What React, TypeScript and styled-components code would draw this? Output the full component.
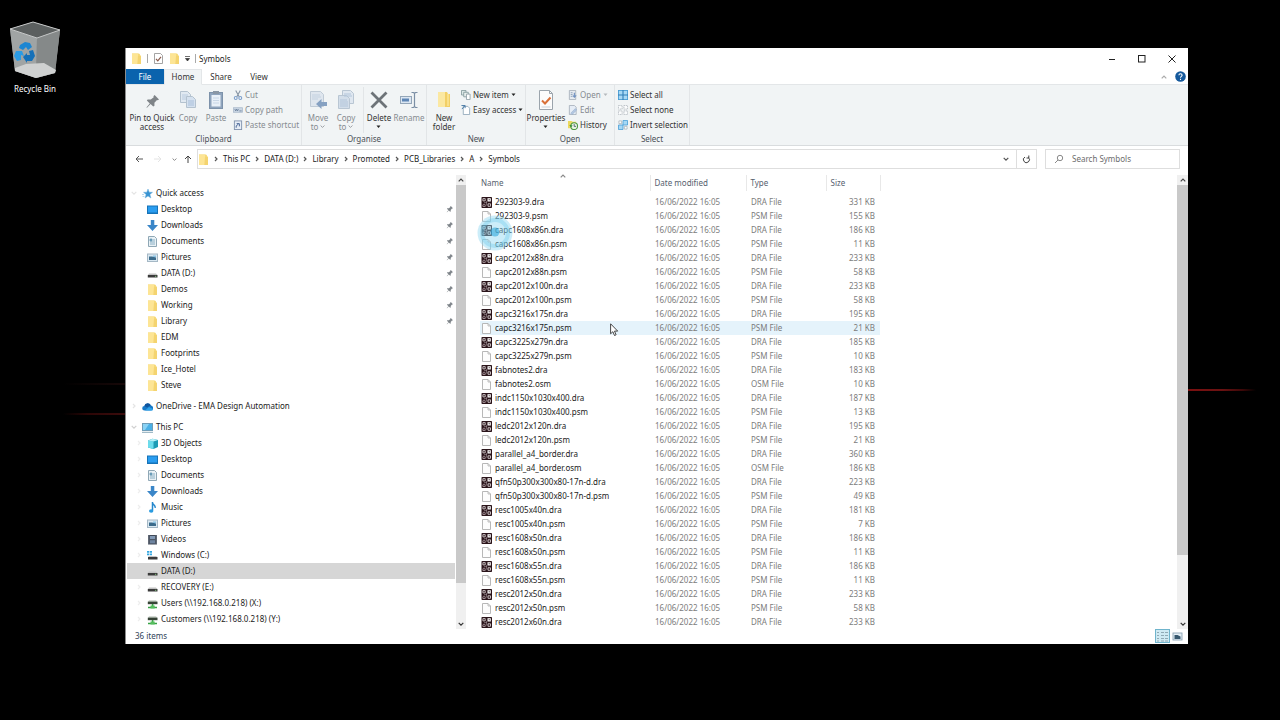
import React from "react";
import styled, { createGlobalStyle, css } from "styled-components";

const GlobalStyle = createGlobalStyle`
  * { box-sizing: border-box; }
  body {
    margin: 0;
    background: #000;
    color: #1b1b1b;
    font: 8px/10px "Noto Sans", "Open Sans", sans-serif;
  }
  button, input { font: inherit; color: inherit; }
  button { border: 0; padding: 0; background: none; }
  a { color: inherit; text-decoration: none; }
  svg { display: block; flex: none; }
`;

/* ---------- desktop ---------- */

const Desktop = styled.main`
  display: grid;
  grid-template-columns: 125px minmax(0, 1fr) 92px;
  align-items: start;
  min-height: 100vh;
  background: #000;
`;

const Shortcut = styled.a`
  display: flex;
  flex-direction: column;
  align-items: center;
  gap: 6px;
  width: 70px;
  padding-top: 20px;
  color: #fff;
`;

const WallpaperSide = styled.div<{ $side: "left" | "right" }>`
  display: flex;
  flex-direction: column;
  ${(p) =>
    p.$side === "left"
      ? css`
          padding: 289px 0 0 63px;
          gap: 28px;
        `
      : css`
          padding: 389px 24px 0 0;
        `}
`;

const Streak = styled.i<{ $tone: "faint" | "dim" | "bright" }>`
  height: 2px;
  background: ${(p) =>
    ({
      faint: "linear-gradient(90deg, #000, #180808)",
      dim: "linear-gradient(90deg, #000, #2c0606 40%, #3c0c0c)",
      bright: "linear-gradient(90deg, #7c1010, #6a1212 50%, #3c0808 80%, #000)",
    })[p.$tone]};
`;

/* ---------- window ---------- */

const Window = styled.section`
  margin: 48px 0 76px;
  border-left: 1px solid #8c8c8c;
  background: #fff;
`;

const TitleBar = styled.header`
  display: flex;
  align-items: center;
  height: 21px;
  padding: 0 1px 0 5px;
`;

const QuickTools = styled.div`
  display: flex;
  align-items: center;
  gap: 5px;
  margin-right: 3px;
`;

const Divider = styled.i`
  width: 1px;
  height: 9px;
  background: #a9a9a9;
`;

const WindowTitle = styled.h1`
  flex: 1;
  margin: 0;
  font-size: 8px;
  font-weight: 400;
`;

const WindowButton = styled.button`
  display: grid;
  place-items: center;
  width: 30px;
  height: 21px;
`;

const TabBar = styled.nav`
  display: flex;
  height: 15px;
  padding-right: 2px;
`;

const Tab = styled.button<{ $kind?: "file" | "active" }>`
  width: 38px;
  height: 16px;
  padding-bottom: 1px;
  border: 1px solid transparent;
  color: #333;
  ${(p) =>
    p.$kind === "file" &&
    css`
      height: 15px;
      padding: 0;
      background: #0a63ad;
      color: #fff;
    `}
  ${(p) =>
    p.$kind === "active" &&
    css`
      position: relative;
      border-color: #e3e6e8;
      border-bottom-color: #f1f4f5;
      background: #f1f4f5;
    `}
`;

const TabBarEnd = styled.div`
  display: flex;
  align-items: center;
  gap: 8px;
  margin-left: auto;
`;

const Ribbon = styled.div`
  display: flex;
  height: 62px;
  border-top: 1px solid #e3e6e8;
  border-bottom: 1px solid #d9dcde;
  background: #f1f4f5;
`;

const Group = styled.section<{ $indent?: number; $end?: number }>`
  display: flex;
  flex-direction: column;
  border-right: 1px solid #e2e5e7;
  & > div {
    padding: 0 ${(p) => p.$end ?? 0}px 0 ${(p) => p.$indent ?? 0}px;
  }
`;

const GroupBody = styled.div`
  display: flex;
  height: 49px;
`;

const GroupName = styled.h2`
  margin: 0;
  font-size: 8px;
  font-weight: 400;
  text-align: center;
  color: #4a4f55;
`;

const BigButton = styled.button<{ $width: number; $muted?: boolean }>`
  display: flex;
  flex-direction: column;
  align-items: center;
  gap: 3px;
  width: ${(p) => p.$width}px;
  padding-top: 5px;
  line-height: 9px;
  white-space: nowrap;
  color: ${(p) => (p.$muted ? "#868b90" : "#333")};
`;

const BigLabel = styled.span`
  display: flex;
  flex-direction: column;
  align-items: center;
`;

const LabelLine = styled.span`
  display: flex;
  align-items: center;
  gap: 2px;
  min-height: 9px;
`;

const SmallColumn = styled.div<{ $width: number; $indent?: number }>`
  display: flex;
  flex-direction: column;
  width: ${(p) => p.$width}px;
  padding: 2px 0 0 ${(p) => p.$indent ?? 0}px;
`;

const SmallButton = styled.button<{ $muted?: boolean }>`
  display: flex;
  align-items: center;
  gap: 2px;
  height: 15px;
  white-space: nowrap;
  color: ${(p) => (p.$muted ? "#868b90" : "#333")};
`;

const GroupSplit = styled.i`
  width: 1px;
  height: 46px;
  margin: 2px 0 0 3px;
  background: #e2e5e7;
`;

/* ---------- address row ---------- */

const AddressRow = styled.div`
  display: flex;
  align-items: center;
  height: 26px;
  padding: 0 8px 0 5px;
`;

const NavButton = styled.button<{ $width: number }>`
  display: grid;
  place-items: center;
  width: ${(p) => p.$width}px;
  height: 20px;
`;

const AddressBox = styled.div`
  display: flex;
  flex: 1;
  align-items: center;
  height: 20px;
  margin-right: 8px;
  border: 1px solid #dedede;
`;

const Crumbs = styled.ol`
  display: flex;
  flex: 1;
  align-items: center;
  margin: 0;
  padding: 0;
  list-style: none;
`;

const Crumb = styled.li`
  display: flex;
  align-items: center;
`;

const CrumbArrow = styled.span`
  display: grid;
  place-items: center;
  width: 14px;
`;

const RefreshButton = styled(NavButton)`
  height: 18px;
  border-left: 1px solid #dedede;
`;

const SearchBox = styled.label`
  display: flex;
  align-items: center;
  gap: 8px;
  width: 135px;
  height: 20px;
  padding-left: 8px;
  border: 1px solid #dedede;
`;

const SearchInput = styled.input`
  flex: 1;
  min-width: 0;
  padding: 0;
  border: 0;
  outline: 0;
  background: none;
  &::placeholder {
    color: #6c6c6c;
    opacity: 1;
  }
`;

/* ---------- panes ---------- */

const Panes = styled.div`
  display: flex;
  min-height: 457px;
`;

const SidePane = styled.aside`
  display: flex;
  width: 340px;
`;

const Tree = styled.nav`
  flex: 1;
  padding: 13px 1px 1px 1px;
`;

const TreeSection = styled.div`
  & + & {
    margin-top: 5px;
  }
`;

const TreeItem = styled.a<{ $child?: boolean; $selected?: boolean }>`
  display: flex;
  align-items: center;
  gap: 3px;
  height: 16px;
  padding: 0 1px 0 ${(p) => (p.$child ? 7 : 2)}px;
  background: ${(p) => (p.$selected ? "#d6d6d6" : "transparent")};
`;

const TreeArrow = styled.span`
  display: grid;
  place-items: center;
  width: 10px;
`;

const TreeLabel = styled.span`
  flex: 1;
`;

const ScrollTrack = styled.div<{ $width: number }>`
  display: flex;
  flex-direction: column;
  width: ${(p) => p.$width}px;
  padding-top: 3px;
  background: linear-gradient(#fff 3px, #f0f0f0 3px);
`;

const ScrollArrow = styled.button`
  display: grid;
  place-items: center;
  height: 10px;
`;

const ScrollThumb = styled.i<{ $share: number }>`
  flex: ${(p) => p.$share};
  background: #c9c9c9;
`;

const ScrollRest = styled.i<{ $share: number }>`
  flex: ${(p) => p.$share};
`;

const FilePane = styled.div`
  position: relative;
  flex: 1;
  min-width: 0;
  padding: 3px 0 0 14px;
`;

const FileTable = styled.table`
  width: 400px;
  table-layout: fixed;
  border-collapse: collapse;
`;

const HeadCell = styled.th<{ $width: number; $first?: boolean }>`
  width: ${(p) => p.$width}px;
  height: 16px;
  padding: 0 0 0 ${(p) => (p.$first ? 1 : 4)}px;
  border-right: 1px solid #e8e8e8;
  font-weight: 400;
  text-align: left;
  color: #56616e;
`;

const HeadGap = styled.tr`
  height: 4px;
`;

const FileRow = styled.tr<{ $hover?: boolean }>`
  height: 14px;
  background: ${(p) => (p.$hover ? "#e5f3fb" : "transparent")};
`;

const Cell = styled.td<{ $align?: "right" }>`
  padding: ${(p) => (p.$align ? "0 5px 0 0" : "0 0 0 5px")};
  text-align: ${(p) => p.$align ?? "left"};
  white-space: nowrap;
  color: #7c7c7c;
`;

const NameCell = styled(Cell)`
  padding: 0 0 0 1px;
  color: #1b1b1b;
`;

const FileName = styled.span`
  display: flex;
  align-items: center;
  gap: 3px;
`;

const SortMark = styled.span`
  position: absolute;
  top: 1px;
  left: 94px;
`;

const BusyPointer = styled.span`
  position: absolute;
  top: 43px;
  left: 11px;
`;

const ArrowPointer = styled.span`
  position: absolute;
  top: 151px;
  left: 144px;
`;

const StatusBar = styled.footer`
  display: flex;
  align-items: center;
  height: 15px;
  padding: 0 3px 1px 9px;
  color: #2f4358;
`;

const ViewButton = styled.button<{ $active?: boolean }>`
  display: grid;
  place-items: center;
  width: 15px;
  height: 14px;
  border: 1px solid ${(p) => (p.$active ? "#6fb4cc" : "transparent")};
  background: ${(p) => (p.$active ? "#cfeaf3" : "none")};
  &:first-of-type {
    margin-left: auto;
  }
`;

/* ---------- icons ---------- */

type IconName =
  | "folder" | "star" | "desktop" | "download" | "document" | "picture" | "drive" | "cloud" | "pc"
  | "cube" | "music" | "video" | "windrive" | "netdrive" | "dra" | "page" | "checkdoc"
  | "cut" | "copypath" | "shortcut" | "newitem" | "easy" | "open" | "edit" | "history"
  | "selectall" | "selectnone" | "invert" | "details" | "thumbs";

const shapes: Record<IconName, React.ReactNode> = {
  folder: (
    <>
      <path d="M1 .5h7l1 1v1h1v8.500H1z" fill="#f6d978" />
      <path d="M1 .5h6v10.500H1z" fill="#fde595" />
      <path d="M7 3h3v8H6z" fill="#f3d06a" opacity=".6" />
    </>
  ),
  star: <path d="M6 1l1.200 3.200 3.300.1-2.600 2.200 1 3.500L6 8 3.100 10l1-3.500L1.500 4.300l3.300-.1zM0 6.500h2M.5 8.500h2" fill="#3793d2" stroke="#6fb0dc" strokeWidth=".5" />,
  desktop: (
    <>
      <rect x="0" y="1.500" width="11" height="8.500" fill="#1673b8" />
      <rect x="1" y="2.500" width="9" height="6" fill="#2a9df0" />
    </>
  ),
  download: <path d="M3.800 0h3.500v5H11L5.500 11 0 5h3.800z" fill="#3a86c8" />,
  document: (
    <>
      <path d="M1.500.5h6l2 2v8h-8z" fill="#e9f1f5" stroke="#8fa7b5" />
      <path d="M3 3h2v2H3zM3 6h5M3 8h5M6 4h2" fill="#5f97b8" stroke="#6f9fb8" strokeWidth=".8" />
    </>
  ),
  picture: (
    <>
      <rect x=".5" y="2" width="10" height="7.500" fill="#dbe9f2" stroke="#a5b8c5" />
      <path d="M2 4.500h3l4 1v2.500H2z" fill="#3c6c8c" />
      <path d="M6 3.500h3v1.500H6z" fill="#8cc4e4" />
    </>
  ),
  drive: (
    <>
      <path d="M2 5.500h7l1.500 1.500H.8z" fill="#c2c2c2" />
      <rect x=".8" y="7" width="9.700" height="2.500" fill="#3b3b3b" />
      <rect x="8" y="7.800" width="1.200" height="1" fill="#7ec27a" />
    </>
  ),
  cloud: (
    <>
      <path d="M2.500 9.500a2.300 2.300 0 010-4.600A3.500 3.500 0 019 4.600a2.500 2.500 0 01.2 4.900z" fill="#1679c8" />
      <path d="M3 9.500l4-3.500 4 2-.5 1.500z" fill="#2fa3ea" />
      <path d="M2.300 5A3.500 3.500 0 018.800 4.200L5 6.500z" fill="#0f559e" />
    </>
  ),
  pc: (
    <>
      <rect x=".5" y="1.500" width="10" height="7" fill="#4ab0e6" stroke="#6f9db8" />
      <path d="M1 2h6L3 8H1z" fill="#8ad2f4" />
      <path d="M0 10.300h11" stroke="#8aa9ba" />
    </>
  ),
  cube: (
    <>
      <path d="M1 2.500L5.500.8 11 2v7L6.500 11 1 9.500z" fill="#1c9bb5" />
      <path d="M1 2.500l5.500 1V11L1 9.500z" fill="#6cdcec" />
      <path d="M1 2.500L5.500.8 11 2 6.500 3.500z" fill="#b4eff7" />
    </>
  ),
  music: (
    <>
      <path d="M5.500 0v8.500M5.500.8c.5 2.200 3.200 2 2.600 5" stroke="#2487cc" strokeWidth="1.500" fill="none" />
      <ellipse cx="4.200" cy="9" rx="2.200" ry="1.700" fill="#2a9be0" />
    </>
  ),
  video: (
    <>
      <rect x="1" y="1" width="9" height="9.500" fill="#414a58" />
      <rect x="3" y="2" width="5" height="3.200" fill="#8299b5" />
      <rect x="3" y="6.200" width="5" height="3.200" fill="#6e84a0" />
      <path d="M1.800 1.500v9M9.200 1.500v9" stroke="#c5ccd5" strokeWidth=".7" strokeDasharray="1 1" />
    </>
  ),
  windrive: (
    <>
      <path d="M0 1h2.200v1.800H0zM2.800 1H5v1.800H2.800zM0 3.400h2.200v1.800H0zM2.800 3.400H5v1.800H2.800z" fill="#35a6e0" />
      <path d="M2 6h7l1.500 1H1z" fill="#c2c2c2" />
      <rect x="1" y="7" width="9.500" height="2.500" fill="#3b3b3b" />
    </>
  ),
  netdrive: (
    <>
      <path d="M2 2.500h7l1.500 1.200H.8z" fill="#a9b5a9" />
      <rect x=".8" y="3.700" width="9.700" height="2.500" fill="#374437" />
      <path d="M5.600 6v3M1 9.500h9" stroke="#37a345" strokeWidth="1.600" />
      <rect x="3.500" y="7.500" width="4.200" height="3" fill="#56bd5e" />
    </>
  ),
  dra: (
    <>
      <rect x=".5" width="10.500" height="11" rx=".8" fill="#2a141a" />
      <path d="M6.500 1.200h3.300v3.300H6.500z" fill="#fff" />
      <path d="M7.700 2.300h1v1h-1z" fill="#2a141a" />
      <g fill="none" stroke="#e6dfe1" strokeWidth=".8">
        <path d="M1.900 1.600h2.300v2.300H1.900zM7 6.800h2.500v2.500H7z" />
        <path d="M1.900 9.500V8a1.200 1.200 0 012.300 0v1.500z" stroke="#b5a5a9" />
        <path d="M3 5.600h3M5.600 4v4.500" strokeWidth=".6" stroke="#a89a9e" />
      </g>
    </>
  ),
  page: (
    <>
      <path d="M1.500.5h5.500l2.500 2.500v7.500h-8z" fill="#fdfdfd" stroke="#b0b0b0" strokeWidth=".9" />
      <path d="M7 .5V3h2.500" fill="none" stroke="#b0b0b0" strokeWidth=".8" />
    </>
  ),
  checkdoc: (
    <>
      <path d="M1.500.5h6l2 2v8h-8z" fill="#fff" stroke="#9a9a9a" strokeWidth=".9" />
      <path d="M3 5.800l1.800 2L8 3.800" fill="none" stroke="#8a5a4c" strokeWidth="1.200" />
    </>
  ),
  cut: (
    <>
      <path d="M3 .5l3.800 7M8 .5l-3.800 7" stroke="#8593a3" strokeWidth="1.200" />
      <circle cx="3" cy="8.800" r="1.600" fill="none" stroke="#7d9fcb" strokeWidth="1.200" />
      <circle cx="8" cy="8.800" r="1.600" fill="none" stroke="#7d9fcb" strokeWidth="1.200" />
    </>
  ),
  copypath: (
    <>
      <rect x=".5" y="3" width="10" height="5" fill="#c9d5e3" stroke="#a8b7c8" strokeWidth=".8" />
      <path d="M2 4.500l1 2 1-2 1 2 1-2M7 6.500h2.500" stroke="#5d7390" strokeWidth=".8" fill="none" />
    </>
  ),
  shortcut: (
    <>
      <rect x="1.500" y="1" width="8" height="9.500" fill="#e6edf6" stroke="#8193ad" />
      <path d="M3.500 8.500V6.500L6 4.500M4 4h3v3" stroke="#4d6a99" strokeWidth="1.100" fill="none" />
    </>
  ),
  newitem: (
    <>
      <path d="M.5.500h5v5h-5z" fill="#dce8e6" stroke="#7f9799" strokeWidth=".9" />
      <path d="M3 2.500h5v5H3z" fill="#e9f0ee" stroke="#7f9799" strokeWidth=".9" />
      <path d="M6 4.500h4v6H6z" fill="#fff" stroke="#8a9aa2" strokeWidth=".9" />
    </>
  ),
  easy: (
    <>
      <path d="M2.500 1.500h5l2 2v7h-7z" fill="#fff" stroke="#8aa3b6" strokeWidth=".9" />
      <path d="M.5.500h4v3M4 1L1 4.500" stroke="#4d7da8" strokeWidth="1.100" fill="none" />
    </>
  ),
  open: (
    <>
      <path d="M1.500.5h7v10h-7z" fill="#e6ebf0" stroke="#a3adb8" strokeWidth=".9" />
      <path d="M3 3h2M3 5h2M3 7h2" stroke="#8ba0b8" />
      <path d="M7 3v4M5.500 6L7 8l2-2" stroke="#6d8fc0" strokeWidth="1.200" fill="none" />
    </>
  ),
  edit: (
    <>
      <path d="M1.500.5h5.500l2 2v8H1.500z" fill="#e6edf6" stroke="#a3adb8" strokeWidth=".9" />
      <path d="M3 9l5-5 1.500 1.500-5 5z" fill="#b4c8e2" stroke="#8fa8c8" strokeWidth=".6" />
    </>
  ),
  history: (
    <>
      <path d="M0 1h4l1 1h4v7H0z" fill="#ecd95f" />
      <circle cx="6.800" cy="6.800" r="3.700" fill="#e7f2e2" stroke="#4f9a45" strokeWidth="1.200" />
      <path d="M6.800 4.500v2.500h2" stroke="#3a4f60" strokeWidth=".9" fill="none" />
      <path d="M1.500 5.500l1.700 2.500 2-2z" fill="#2f8a32" />
    </>
  ),
  selectall: (
    <>
      <rect x=".5" y=".5" width="10" height="10" fill="#a6d8f5" stroke="#4a9ed6" />
      <path d="M5.500 0v11M0 5.500h11" stroke="#2f7fb8" strokeWidth="1.200" />
    </>
  ),
  selectnone: (
    <g fill="#fbfcfd" stroke="#b3b9bf" strokeWidth=".9" strokeDasharray="1.500 .7">
      <path d="M.5.500h4v4h-4zM6.500.500h4v4h-4zM.5 6.500h4v4h-4zM6.500 6.500h4v4h-4z" />
    </g>
  ),
  invert: (
    <>
      <g fill="#a6d8f5" stroke="#4a9ed6" strokeWidth=".9">
        <path d="M5.500.500h5v5h-5zM.5 5.500h5v5h-5z" />
      </g>
      <g fill="#fbfcfd" stroke="#a3adb5" strokeWidth=".8">
        <path d="M1 1h3v3H1zM7 7h3v3H7z" />
      </g>
    </>
  ),
  details: (
    <path d="M0 1.500h2M0 4.500h2M0 7.500h2M0 10h2M4 1.500h3M4 4.500h3M4 7.500h3M4 10h3M8 1.500h3M8 4.500h3M8 7.500h3M8 10h3" stroke="#8aa3ae" strokeWidth=".9" />
  ),
  thumbs: (
    <>
      <rect x="1" y="2" width="9" height="7" fill="#e4eef5" stroke="#8fa5b5" strokeWidth=".9" />
      <path d="M2.500 4h3l3 1.500V8h-6z" fill="#37586e" />
    </>
  ),
};

const Icon = ({ name, size = 11 }: { name: IconName; size?: number }) => (
  <svg width={size} height={size} viewBox="0 0 11 11" aria-hidden="true">
    {shapes[name]}
  </svg>
);

type ChevronProps = { dir: "up" | "down" | "right"; color?: string; size?: number };

const Chevron = ({ dir, color = "#555", size = 6 }: ChevronProps) => (
  <svg width={size} height={size} viewBox="0 0 6 6" fill="none" stroke={color} strokeWidth="1.200" aria-hidden="true">
    <path d={{ up: "M.7 4.300L3 2l2.300 2.300", down: "M.7 1.800L3 4.100l2.300-2.300", right: "M2 1l2 2-2 2" }[dir]} />
  </svg>
);

const Caret = ({ color = "#222" }: { color?: string }) => (
  <svg width="5" height="5" viewBox="0 0 5 5" aria-hidden="true">
    <path d="M.5 1.500h4L2.500 4z" fill={color} />
  </svg>
);

const pinPath =
  "M12 2.500l5.500 5.500-1.500 1-1-.3-3.200 3.600v3.700l-1.500 1L7 13.800 2.500 18.300H2v-.5L6 13 2.300 9.500l1-1.500 3.900.2 3.700-3-.4-1.200z";

const Pin = () => (
  <svg width="8" height="8" viewBox="0 0 20 20" aria-hidden="true">
    <path d={pinPath} fill="#7f858a" />
  </svg>
);

type BigIconName = "pin" | "copy" | "paste" | "moveto" | "copyto" | "delete" | "rename" | "newfolder" | "properties";

const bigShapes: Record<BigIconName, React.ReactNode> = {
  pin: (
    <g transform="translate(3 3) scale(.8)">
      <path d={pinPath} fill="#7f8488" />
    </g>
  ),
  copy: (
    <g stroke="#b4c2cf" fill="#e1e9f1">
      <path d="M2.500 1.500h7l3 3v8h-10z" />
      <path d="M4 5h6M4 7h6M4 9h4" stroke="#b9cbe0" />
      <path d="M8.500 6.500h6l3 3v8h-9z" fill="#d5e1ef" />
      <path d="M10 11h6M10 13h6M10 15h6" stroke="#a9bfda" />
    </g>
  ),
  paste: (
    <>
      <rect x="3.500" y="2.500" width="13" height="16" fill="#8fa4bd" stroke="#7d92aa" />
      <rect x="5.500" y="5" width="9" height="11.500" fill="#e9f0f8" />
      <rect x="7" y="1" width="6" height="3" fill="#8a97a5" />
      <path d="M7 8h6M7 10.500h6M7 13h6" stroke="#c8d6e6" />
    </>
  ),
  moveto: (
    <>
      <path d="M2.500 1.500h10l3 3v12h-13z" fill="#dfe6ee" stroke="#c0cbd6" />
      <path d="M4 5h8M4 7h9M4 9h6" stroke="#c3d1e0" />
      <path d="M8 14l5.500-5v3H19v4h-5.500v3z" fill="#86a1c2" />
    </>
  ),
  copyto: (
    <g stroke="#b9c6d3" fill="#dfe7f0">
      <path d="M6.500.500h8l3 3v10h-11z" />
      <path d="M2.500 5.500h8l3 3v10h-11z" fill="#d3deea" />
      <path d="M8 4h7M8 6h8M4 10h7M4 12h8M4 14h8M4 16h8" stroke="#b2c5da" />
    </g>
  ),
  delete: <path d="M2.500 2.500l15 15M17.500 2.500l-15 15" stroke="#6d7378" strokeWidth="2.800" />,
  rename: (
    <>
      <rect x="1.500" y="6.500" width="11" height="7" fill="#dbe6f2" stroke="#94a6b8" />
      <rect x="3" y="8.500" width="7" height="3" fill="#5f86b5" />
      <path d="M15.500 3v14M12.500 2.500h2l1 1 1-1h2M12.500 17.500h2l1-1 1 1h2" stroke="#7b8fa5" strokeWidth="1.200" fill="none" />
    </>
  ),
  newfolder: (
    <>
      <path d="M4 2h9l1 2h2v13H4z" fill="#f2cf66" />
      <path d="M4 2h7v15H4z" fill="#fbe8a2" />
      <path d="M13 4h2v12h-2z" fill="#f9e08a" />
    </>
  ),
  properties: (
    <>
      <path d="M3.500.500h10l3 3v16h-13z" fill="#fcfcfc" stroke="#9ba4ac" />
      <path d="M13.500.500v3h3" fill="none" stroke="#9ba4ac" />
      <path d="M6 10.500l3 3 5.500-6" fill="none" stroke="#d9713a" strokeWidth="2" />
      <path d="M5.500 17h9" stroke="#c8d2da" />
    </>
  ),
};

const BigIcon = ({ name }: { name: BigIconName }) => (
  <svg width="20" height="20" viewBox="0 0 20 20" aria-hidden="true">
    {bigShapes[name]}
  </svg>
);

const RecycleBinIcon = () => (
  <svg width="54" height="58" viewBox="0 0 54 58" aria-hidden="true">
    <path d="M2 9L25 2l27 8-5 43-19 5L7 51z" fill="#8d9191" />
    <path d="M2 9l27 9-1 40-21-7z" fill="#a0a4a4" />
    <path d="M29 18l23-8-5 43-19 5z" fill="#858989" />
    <path d="M7 48l11-4 18-1 12 7-1 3-19 5-21-7z" fill="#cfd1d1" />
    <path d="M2 9L25 2l27 8-23 8z" fill="#5b5f5f" stroke="#c5c7c7" />
    <g fill="#1c86d2">
      <path d="M12 25l5-3 5 1 2 4-4 3-2-3-3 3-4-2z" />
      <path d="M8 31l6 0 2 5-3-1 0 5-4 1-3-5z" fill="#2b9be4" />
      <path d="M15 37l4-4v2h3l-1-4 4-1 2 6-3 5h-5v2z" fill="#1570b8" />
    </g>
  </svg>
);

/* ---------- content ---------- */

const crumbs = ["This PC", "DATA (D:)", "Library", "Promoted", "PCB_Libraries", "A", "Symbols"];

type Node = { label: string; icon: IconName; pinned?: boolean; selected?: boolean };
type Section = { label: string; icon: IconName; arrow: "down" | "right"; tone: string; nested?: boolean; items: Node[] };

const tree: Section[] = [
  {
    label: "Quick access", icon: "star", arrow: "down", tone: "#e4e4e4",
    items: [
      { label: "Desktop", icon: "desktop", pinned: true },
      { label: "Downloads", icon: "download", pinned: true },
      { label: "Documents", icon: "document", pinned: true },
      { label: "Pictures", icon: "picture", pinned: true },
      { label: "DATA (D:)", icon: "drive", pinned: true },
      { label: "Demos", icon: "folder", pinned: true },
      { label: "Working", icon: "folder", pinned: true },
      { label: "Library", icon: "folder", pinned: true },
      { label: "EDM", icon: "folder" },
      { label: "Footprints", icon: "folder" },
      { label: "Ice_Hotel", icon: "folder" },
      { label: "Steve", icon: "folder" },
    ],
  },
  { label: "OneDrive - EMA Design Automation", icon: "cloud", arrow: "right", tone: "#e4e4e4", items: [] },
  {
    label: "This PC", icon: "pc", arrow: "down", tone: "#d0d0d0", nested: true,
    items: [
      { label: "3D Objects", icon: "cube" },
      { label: "Desktop", icon: "desktop" },
      { label: "Documents", icon: "document" },
      { label: "Downloads", icon: "download" },
      { label: "Music", icon: "music" },
      { label: "Pictures", icon: "picture" },
      { label: "Videos", icon: "video" },
      { label: "Windows (C:)", icon: "windrive" },
      { label: "DATA (D:)", icon: "drive", selected: true },
      { label: "RECOVERY (E:)", icon: "drive" },
      { label: "Users (\\\\192.168.0.218) (X:)", icon: "netdrive" },
      { label: "Customers (\\\\192.168.0.218) (Y:)", icon: "netdrive" },
    ],
  },
];

const files: [string, number][] = [
  ["292303-9.dra", 331], ["292303-9.psm", 155],
  ["capc1608x86n.dra", 186], ["capc1608x86n.psm", 11],
  ["capc2012x88n.dra", 233], ["capc2012x88n.psm", 58],
  ["capc2012x100n.dra", 233], ["capc2012x100n.psm", 58],
  ["capc3216x175n.dra", 195], ["capc3216x175n.psm", 21],
  ["capc3225x279n.dra", 185], ["capc3225x279n.psm", 10],
  ["fabnotes2.dra", 183], ["fabnotes2.osm", 10],
  ["indc1150x1030x400.dra", 187], ["indc1150x1030x400.psm", 13],
  ["ledc2012x120n.dra", 195], ["ledc2012x120n.psm", 21],
  ["parallel_a4_border.dra", 360], ["parallel_a4_border.osm", 186],
  ["qfn50p300x300x80-17n-d.dra", 223], ["qfn50p300x300x80-17n-d.psm", 49],
  ["resc1005x40n.dra", 181], ["resc1005x40n.psm", 7],
  ["resc1608x50n.dra", 186], ["resc1608x50n.psm", 11],
  ["resc1608x55n.dra", 186], ["resc1608x55n.psm", 11],
  ["resc2012x50n.dra", 233], ["resc2012x50n.psm", 58],
  ["resc2012x60n.dra", 233],
];
const hovered = "capc3216x175n.psm";

/* ---------- composed parts ---------- */

type BigProps = { icon: BigIconName; width: number; lines: string[]; muted?: boolean; caret?: "below" | "inline" };

const Big = ({ icon, width, lines, muted, caret }: BigProps) => (
  <BigButton $width={width} $muted={muted}>
    <BigIcon name={icon} />
    <BigLabel>
      {lines.map((line, i) => (
        <LabelLine key={line}>
          {line}
          {caret === "inline" && i === lines.length - 1 && <Chevron dir="down" color="#9a9fa4" size={5} />}
        </LabelLine>
      ))}
      {caret === "below" && <LabelLine><Caret /></LabelLine>}
    </BigLabel>
  </BigButton>
);

const Small = ({ icon, label, muted, caret }: { icon: IconName; label: string; muted?: boolean; caret?: boolean }) => (
  <SmallButton $muted={muted}>
    <Icon name={icon} size={10} />
    {label}
    {caret && <Caret color={muted ? "#b5b9bd" : "#222"} />}
  </SmallButton>
);

const ScrollBar = ({ width, thumb, rest }: { width: number; thumb: number; rest: number }) => (
  <ScrollTrack $width={width}>
    <ScrollArrow aria-label="Scroll up"><Chevron dir="up" color="#444" /></ScrollArrow>
    <ScrollThumb $share={thumb} />
    <ScrollRest $share={rest} />
    <ScrollArrow aria-label="Scroll down"><Chevron dir="down" color="#333" /></ScrollArrow>
  </ScrollTrack>
);

export default function App() {
  return (
    <>
      <GlobalStyle />
      <Desktop>
        <div>
          <Shortcut href="#">
            <RecycleBinIcon />
            Recycle Bin
          </Shortcut>
          <WallpaperSide $side="left">
            <Streak $tone="faint" />
            <Streak $tone="dim" />
          </WallpaperSide>
        </div>

        <Window>
          <TitleBar>
            <QuickTools>
              <Icon name="folder" />
              <Divider />
              <Icon name="checkdoc" />
              <Icon name="folder" />
              <svg width="5" height="7" viewBox="0 0 5 7" aria-hidden="true">
                <path d="M0 1.500h5M.5 3.500h4L2.500 6z" stroke="#333" strokeWidth=".7" fill="#333" />
              </svg>
              <Divider />
            </QuickTools>
            <WindowTitle>Symbols</WindowTitle>
            <WindowButton aria-label="Minimise">
              <svg width="8" height="8"><path d="M1 4.500h6" stroke="#222" /></svg>
            </WindowButton>
            <WindowButton aria-label="Maximise">
              <svg width="8" height="8"><rect x=".5" y=".5" width="6.500" height="6.500" fill="none" stroke="#222" /></svg>
            </WindowButton>
            <WindowButton aria-label="Close">
              <svg width="8" height="8"><path d="M.5.500l7 7M7.500.500l-7 7" stroke="#222" /></svg>
            </WindowButton>
          </TitleBar>

          <TabBar>
            <Tab $kind="file">File</Tab>
            <Tab $kind="active">Home</Tab>
            <Tab>Share</Tab>
            <Tab>View</Tab>
            <TabBarEnd>
              <Chevron dir="up" color="#aaa" />
              <svg width="11" height="11" viewBox="0 0 11 11" role="img" aria-label="Help">
                <circle cx="5.500" cy="5.500" r="5.300" fill="#15599c" />
                <path d="M3.900 4.200c0-2 3.200-2 3.200 0 0 1.200-1.600 1.200-1.600 2.600M5.500 7.800v1.100" stroke="#fff" strokeWidth="1.100" fill="none" />
              </svg>
            </TabBarEnd>
          </TabBar>

          <Ribbon>
            <Group $indent={4}>
              <GroupBody>
                <Big icon="pin" width={44} lines={["Pin to Quick", "access"]} />
                <Big icon="copy" width={28} lines={["Copy"]} muted />
                <Big icon="paste" width={28} lines={["Paste"]} muted />
                <SmallColumn $width={71} $indent={3}>
                  <Small icon="cut" label="Cut" muted />
                  <Small icon="copypath" label="Copy path" muted />
                  <Small icon="shortcut" label="Paste shortcut" muted />
                </SmallColumn>
              </GroupBody>
              <GroupName>Clipboard</GroupName>
            </Group>
            <Group $indent={2} $end={2}>
              <GroupBody>
                <Big icon="moveto" width={28} lines={["Move", "to"]} muted caret="inline" />
                <Big icon="copyto" width={28} lines={["Copy", "to"]} muted caret="inline" />
                <GroupSplit />
                <Big icon="delete" width={30} lines={["Delete"]} caret="below" />
                <Big icon="rename" width={30} lines={["Rename"]} muted />
              </GroupBody>
              <GroupName>Organise</GroupName>
            </Group>
            <Group>
              <GroupBody>
                <Big icon="newfolder" width={34} lines={["New", "folder"]} />
                <SmallColumn $width={64}>
                  <Small icon="newitem" label="New item" caret />
                  <Small icon="easy" label="Easy access" caret />
                </SmallColumn>
              </GroupBody>
              <GroupName>New</GroupName>
            </Group>
            <Group>
              <GroupBody>
                <Big icon="properties" width={40} lines={["Properties"]} caret="below" />
                <SmallColumn $width={48} $indent={2}>
                  <Small icon="open" label="Open" muted caret />
                  <Small icon="edit" label="Edit" muted />
                  <Small icon="history" label="History" />
                </SmallColumn>
              </GroupBody>
              <GroupName>Open</GroupName>
            </Group>
            <Group $indent={3}>
              <GroupBody>
                <SmallColumn $width={71}>
                  <Small icon="selectall" label="Select all" />
                  <Small icon="selectnone" label="Select none" />
                  <Small icon="invert" label="Invert selection" />
                </SmallColumn>
              </GroupBody>
              <GroupName>Select</GroupName>
            </Group>
          </Ribbon>

          <AddressRow>
            <NavButton $width={16} aria-label="Back">
              <svg width="8" height="8" fill="none" stroke="#555"><path d="M8 4H1M4 1L1 4l3 3" /></svg>
            </NavButton>
            <NavButton $width={22} aria-label="Forward">
              <svg width="8" height="8" fill="none" stroke="#e4e4e4"><path d="M0 4h7M4 1l3 3-3 3" /></svg>
            </NavButton>
            <NavButton $width={10} aria-label="Recent locations"><Chevron dir="down" color="#888" size={5} /></NavButton>
            <NavButton $width={18} aria-label="Up">
              <svg width="8" height="8" fill="none" stroke="#444"><path d="M4 8V1M1 4l3-3 3 3" /></svg>
            </NavButton>
            <AddressBox>
              <Icon name="folder" />
              <Crumbs>
                {crumbs.map((c) => (
                  <Crumb key={c}>
                    <CrumbArrow><Chevron dir="right" /></CrumbArrow>
                    <a href="#">{c}</a>
                  </Crumb>
                ))}
              </Crumbs>
              <NavButton $width={20} aria-label="Previous locations"><Chevron dir="down" /></NavButton>
              <RefreshButton $width={20} aria-label="Refresh">
                <svg width="9" height="9" fill="none" stroke="#444"><path d="M3 2a3 3 0 103.500.5M6.800.5v2.500H4.500" /></svg>
              </RefreshButton>
            </AddressBox>
            <SearchBox>
              <svg width="10" height="10" fill="none" stroke="#8a8a8a" aria-hidden="true">
                <circle cx="6" cy="4" r="2.700" />
                <path d="M4 6L1 9" />
              </svg>
              <SearchInput type="text" placeholder="Search Symbols" aria-label="Search Symbols" />
            </SearchBox>
          </AddressRow>

          <Panes>
            <SidePane>
              <Tree>
                {tree.map((s) => (
                  <TreeSection key={s.label}>
                    <TreeItem href="#">
                      <TreeArrow><Chevron dir={s.arrow} color={s.tone} /></TreeArrow>
                      <Icon name={s.icon} />
                      <TreeLabel>{s.label}</TreeLabel>
                    </TreeItem>
                    {s.items.map((n) => (
                      <TreeItem key={n.label} href="#" $child $selected={n.selected}>
                        <TreeArrow>{s.nested && !n.selected && <Chevron dir="right" color="#ededed" />}</TreeArrow>
                        <Icon name={n.icon} />
                        <TreeLabel>{n.label}</TreeLabel>
                        {n.pinned && <Pin />}
                      </TreeItem>
                    ))}
                  </TreeSection>
                ))}
              </Tree>
              <ScrollBar width={10} thumb={398} rest={36} />
            </SidePane>

            <FilePane>
              <FileTable>
                <thead>
                  <tr>
                    <HeadCell $width={170} $first>Name</HeadCell>
                    <HeadCell $width={96}>Date modified</HeadCell>
                    <HeadCell $width={80}>Type</HeadCell>
                    <HeadCell $width={54}>Size</HeadCell>
                  </tr>
                </thead>
                <tbody>
                  <HeadGap />
                  {files.map(([name, size]) => {
                    const ext = name.slice(-3);
                    return (
                      <FileRow key={name} $hover={name === hovered}>
                        <NameCell>
                          <FileName>
                            <Icon name={ext === "dra" ? "dra" : "page"} />
                            {name}
                          </FileName>
                        </NameCell>
                        <Cell>16/06/2022 16:05</Cell>
                        <Cell>{ext.toUpperCase()} File</Cell>
                        <Cell $align="right">{size} KB</Cell>
                      </FileRow>
                    );
                  })}
                </tbody>
              </FileTable>
              <SortMark><Chevron dir="up" color="#888" /></SortMark>
              <BusyPointer>
                <svg width="36" height="36" viewBox="0 0 36 36" aria-hidden="true">
                  <circle cx="18" cy="18" r="17.500" fill="#8fd8f2" opacity=".45" />
                  <circle cx="18" cy="18" r="13" fill="none" stroke="#67c8ec" strokeWidth="4" opacity=".35" />
                  <circle cx="18" cy="17" r="4.500" fill="#2fa9dc" opacity=".6" />
                </svg>
              </BusyPointer>
              <ArrowPointer>
                <svg width="9" height="14" viewBox="0 0 9 14" aria-hidden="true">
                  <path d="M.6.800v10l2.300-2.100 1.600 3.800 1.600-.7-1.600-3.700h3.200z" fill="#fff" stroke="#333" strokeWidth=".9" />
                </svg>
              </ArrowPointer>
            </FilePane>
            <ScrollBar width={11} thumb={370} rest={64} />
          </Panes>

          <StatusBar>
            36 items
            <ViewButton $active aria-label="Details view"><Icon name="details" /></ViewButton>
            <ViewButton aria-label="Large icons view"><Icon name="thumbs" /></ViewButton>
          </StatusBar>
        </Window>

        <WallpaperSide $side="right">
          <Streak $tone="bright" />
        </WallpaperSide>
      </Desktop>
    </>
  );
}
